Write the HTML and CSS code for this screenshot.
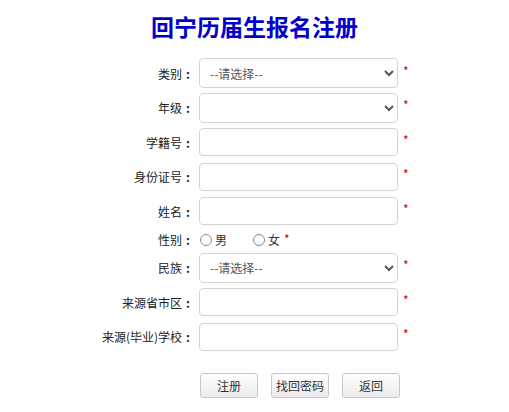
FILE: index.html
```html
<!DOCTYPE html>
<html lang="zh-CN">
<head>
<meta charset="utf-8">
<title>回宁历届生报名注册</title>
<link rel="stylesheet" href="styles.css">
</head>
<body>
<h1 class="title">回宁历届生报名注册</h1>
<form class="form">
  <div class="row">
    <label class="label">类别<span class="colon">:</span></label>
    <select class="box select"><option>--请选择--</option></select>
    <span class="req">*</span>
  </div>
  <div class="row">
    <label class="label">年级<span class="colon">:</span></label>
    <select class="box select"><option></option></select>
    <span class="req">*</span>
  </div>
  <div class="row">
    <label class="label">学籍号<span class="colon">:</span></label>
    <input class="box input" type="text">
    <span class="req">*</span>
  </div>
  <div class="row">
    <label class="label">身份证号<span class="colon">:</span></label>
    <input class="box input" type="text">
    <span class="req">*</span>
  </div>
  <div class="row">
    <label class="label">姓名<span class="colon">:</span></label>
    <input class="box input" type="text">
    <span class="req">*</span>
  </div>
  <div class="row row-sex">
    <label class="label">性别<span class="colon">:</span></label>
    <span class="radio-item radio-male"><input class="radio" type="radio" name="sex">男</span>
    <span class="radio-item"><input class="radio" type="radio" name="sex">女</span>
    <span class="req req-sex">*</span>
  </div>
  <div class="row">
    <label class="label">民族<span class="colon">:</span></label>
    <select class="box select"><option>--请选择--</option></select>
    <span class="req">*</span>
  </div>
  <div class="row">
    <label class="label">来源省市区<span class="colon">:</span></label>
    <input class="box input" type="text">
    <span class="req">*</span>
  </div>
  <div class="row">
    <label class="label">来源(毕业)学校<span class="colon">:</span></label>
    <input class="box input" type="text">
    <span class="req">*</span>
  </div>
  <div class="actions">
    <button type="button" class="btn">注册</button>
    <button type="button" class="btn">找回密码</button>
    <button type="button" class="btn">返回</button>
  </div>
</form>
</body>
</html>
```

FILE: styles.css
```css
html, body {
  margin: 0;
  padding: 0;
  background: #fff;
}
body {
  font-family: "Noto Sans CJK SC", "Noto Sans", sans-serif;
  font-size: 12px;
  color: #333;
}
.title {
  margin: 0;
  padding-top: 11px;
  height: 30px;
  line-height: 30px;
  text-align: center;
  font-size: 23px;
  font-weight: bold;
  color: #0000cc;
}
.form {
  margin: 15px 0 0;
}
.row {
  display: flex;
  align-items: center;
  height: 34.5px;
}
.row-sex {
  height: 22px;
}
.label {
  width: 194px;
  margin-right: 5px;
  text-align: right;
  color: #222;
  white-space: nowrap;
}
.colon {
  display: inline-block;
  width: 12px;
  text-align: center;
  font-weight: bold;
}
.box {
  box-sizing: border-box;
  width: 199px;
  margin: 0;
  border: 1px solid #d4d4d4;
  border-radius: 4px;
  background: #fff;
  font-family: inherit;
  font-size: 12px;
  color: #555;
}
.select {
  height: 30px;
  padding: 0 4px 0 6px;
}
.input {
  height: 28px;
  padding: 0 6px;
}
.req {
  margin-left: 5px;
  color: #cc0000;
  font-size: 12px;
  position: relative;
  top: -3px;
}
.radio-item {
  display: inline-flex;
  align-items: center;
  color: #333;
}
.radio-male {
  margin-right: 25px;
}
.radio {
  appearance: none;
  -webkit-appearance: none;
  box-sizing: border-box;
  width: 12px;
  height: 12px;
  margin: 0 3px 0 1px;
  border: 1px solid #8c8c8c;
  border-radius: 50%;
  background: #fff;
}
.req-sex {
  margin-left: 4px;
  top: -1px;
}
.actions {
  display: flex;
  gap: 13px;
  margin: 19px 0 0 200px;
}
.btn {
  box-sizing: border-box;
  width: 58px;
  height: 25px;
  padding: 0;
  border: 1px solid #c8c8c8;
  border-radius: 3px;
  background: linear-gradient(#ffffff, #ebebeb);
  font-family: inherit;
  font-size: 12px;
  color: #333;
}
```
